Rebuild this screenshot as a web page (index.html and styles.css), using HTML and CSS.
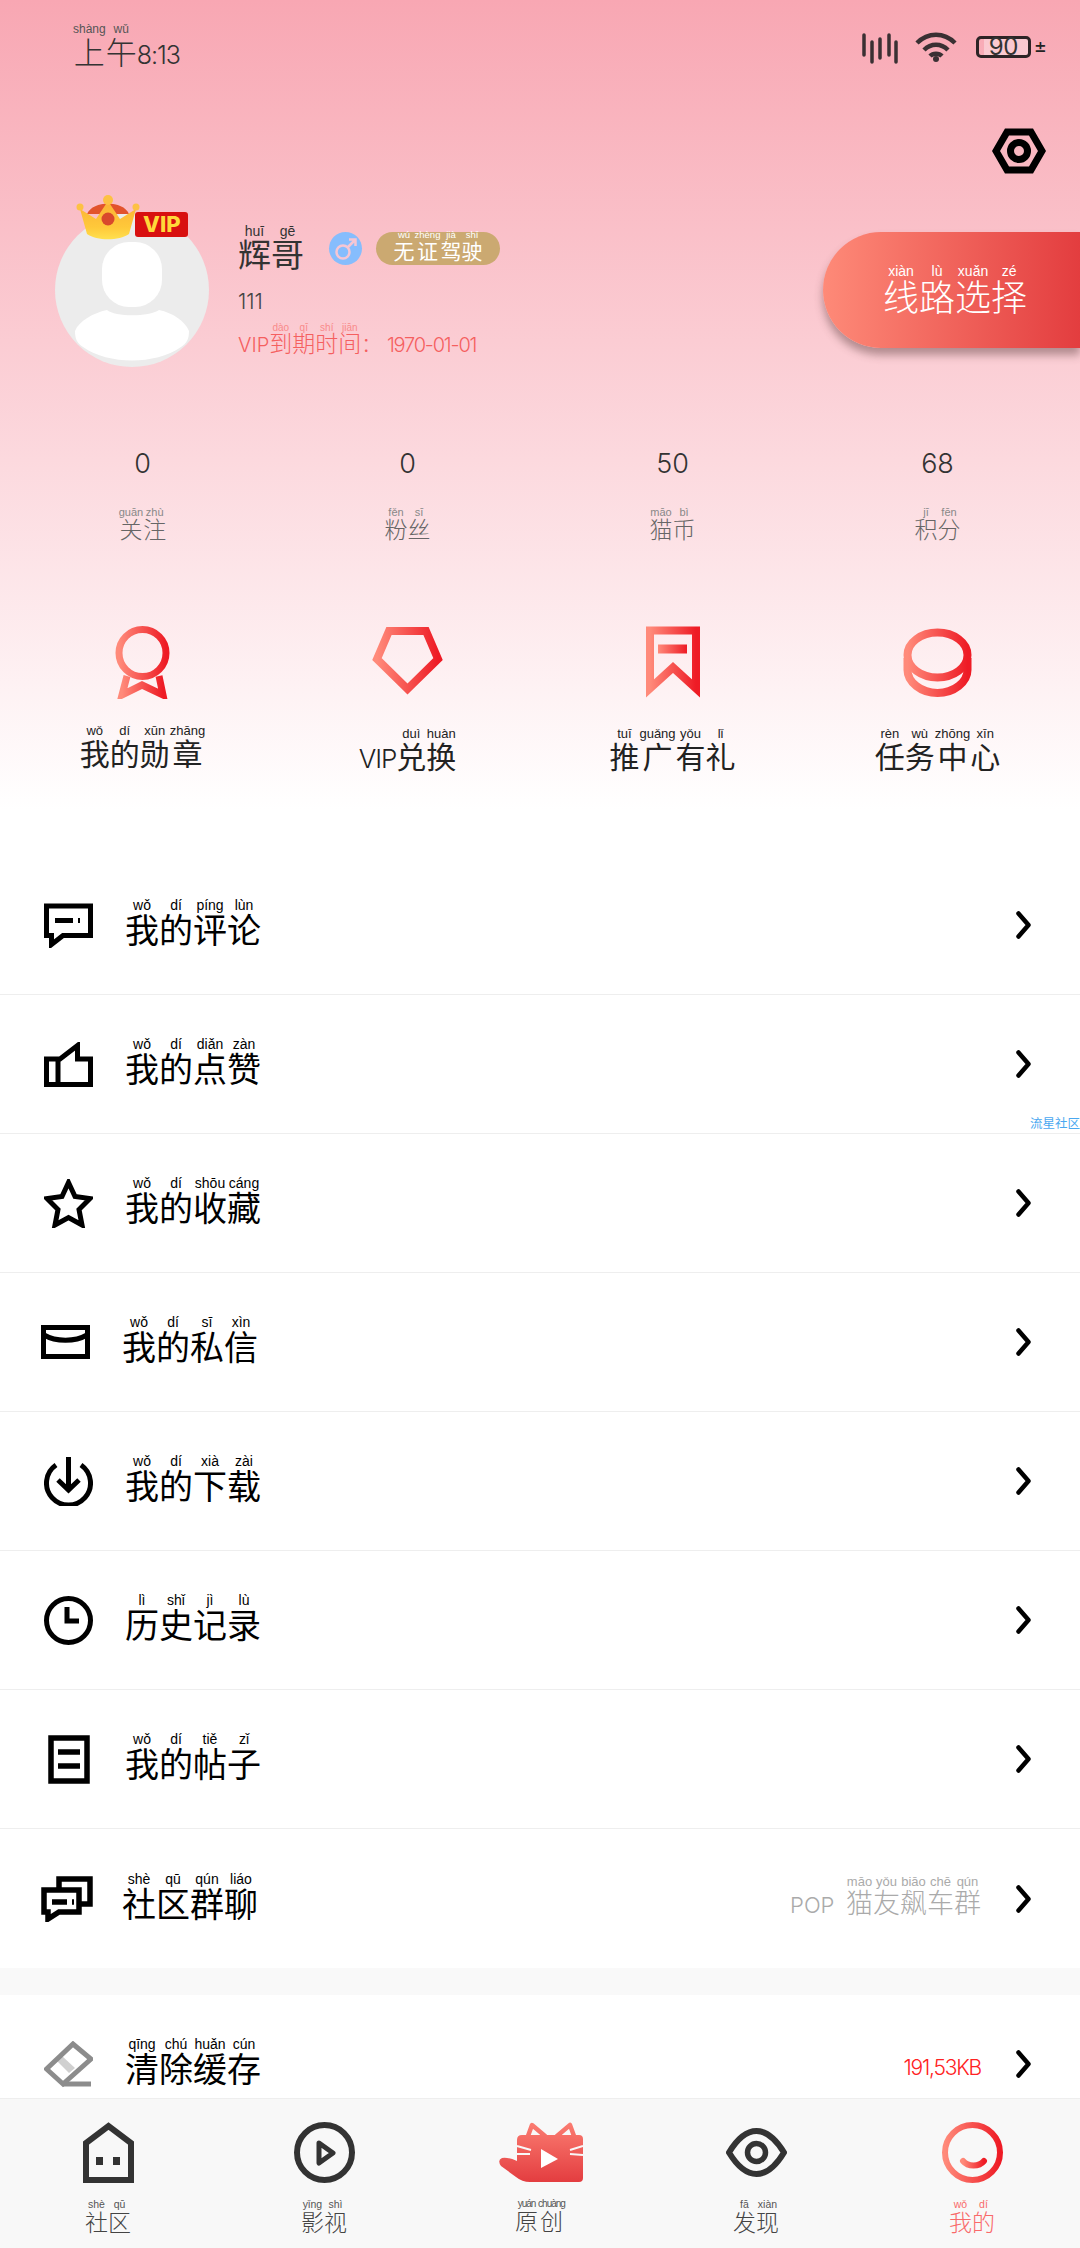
FILE: index.html
```html
<!DOCTYPE html>
<html lang="zh-CN">
<head>
<meta charset="utf-8">
<title>我的</title>
<link rel="stylesheet" href="styles.css">
</head>
<body>
<div class="page">
  <section class="hero">
    <div class="status">
      <div class="time"><ruby>上<rt>shàng</rt></ruby><ruby>午<rt>wǔ</rt></ruby><span class="time-num">8:13</span></div>
      <div class="status-icons">
        <svg class="ic-signal" viewBox="0 0 40 32"><path d="M3 3V23M11 10V30M19 7V26M28 3V23M35 10V30"/></svg>
        <svg class="ic-wifi" viewBox="0 0 42 30"><path d="M2 11C13 0 29 0 40 11"/><path d="M9 18C16 11 26 11 33 18"/><path d="M15 24C18 21 24 21 27 24" /><circle cx="21" cy="27" r="3"/></svg>
        <div class="battery"><span class="battery-num">90</span></div>
        <span class="battery-sign">±</span>
      </div>
    </div>
    <div class="settings-row">
      <svg class="ic-settings" viewBox="0 0 54 46"><path d="M15 4H39L50 23L39 42H15L4 23Z"/><circle cx="27" cy="23" r="8.5"/></svg>
    </div>
    <div class="profile">
      <div class="avatar">
        <svg class="avatar-img" viewBox="0 0 154 154">
          <circle cx="77" cy="77" r="77" fill="#ececec"/>
          <rect x="47" y="29" width="60" height="65" rx="27" fill="#fff"/>
          <path d="M20 118C24 108 38 100 52 97C60 104 94 104 104 97C118 100 130 108 134 118C134 126 132 130 126 134C100 152 54 152 28 134C22 130 20 126 20 118Z" fill="#fff"/>
        </svg>
        <span class="vip-badge">VIP</span>
        <svg class="crown" viewBox="0 0 66 46">
          <defs>
            <linearGradient id="crownFill" x1="0" y1="0" x2="0" y2="1"><stop offset="0" stop-color="#fbb035"/><stop offset=".7" stop-color="#ffc93a"/><stop offset="1" stop-color="#ffe04f"/></linearGradient>
          </defs>
          <path d="M12 20C18 6 48 6 54 20Z" fill="#e2532d"/>
          <path d="M5 15L21 25L33 7L45 25L61 15L54 40C44 47 22 47 12 40Z" fill="url(#crownFill)"/>
          <circle cx="33" cy="6" r="5" fill="#fdc143"/>
          <circle cx="5" cy="13" r="3.5" fill="#fdc143"/>
          <circle cx="61" cy="13" r="3.5" fill="#fdc143"/>
          <circle cx="33" cy="25" r="6.5" fill="#d9482c"/>
        </svg>
      </div>
      <div class="info">
        <div class="name-row">
          <span class="name"><ruby>辉<rt>huī</rt></ruby><ruby>哥<rt>gē</rt></ruby></span>
          <span class="gender"><svg viewBox="0 0 33 33"><circle cx="14" cy="20" r="6.5"/><path d="M18.5 15.5L26 8M20 7.5H26.5V14"/></svg></span>
          <span class="tag"><span class="tag-text"><ruby>无<rt>wú</rt></ruby><ruby>证<rt>zhèng</rt></ruby><ruby>驾<rt>jià</rt></ruby><ruby>驶<rt>shǐ</rt></ruby></span></span>
        </div>
        <div class="sign">111</div>
        <div class="expire">VIP<ruby>到<rt>dào</rt></ruby><ruby>期<rt>qī</rt></ruby><ruby>时<rt>shí</rt></ruby><ruby>间<rt>jiān</rt></ruby>： <span class="expire-date">1970-01-01</span></div>
      </div>
      <div class="route-btn"><ruby>线<rt>xiàn</rt></ruby><ruby>路<rt>lù</rt></ruby><ruby>选<rt>xuǎn</rt></ruby><ruby>择<rt>zé</rt></ruby></div>
    </div>
    <div class="stats">
      <div class="stat"><span class="stat-num">0</span><span class="stat-label"><ruby>关<rt>guān</rt></ruby><ruby>注<rt>zhù</rt></ruby></span></div>
      <div class="stat"><span class="stat-num">0</span><span class="stat-label"><ruby>粉<rt>fěn</rt></ruby><ruby>丝<rt>sī</rt></ruby></span></div>
      <div class="stat"><span class="stat-num">50</span><span class="stat-label"><ruby>猫<rt>māo</rt></ruby><ruby>币<rt>bì</rt></ruby></span></div>
      <div class="stat"><span class="stat-num">68</span><span class="stat-label"><ruby>积<rt>jī</rt></ruby><ruby>分<rt>fēn</rt></ruby></span></div>
    </div>
    <div class="features">
      <div class="feature">
        <svg class="fi fi-medal" viewBox="0 0 55 73">
          <defs>
            <linearGradient id="hot" x1="0" y1="0" x2="1" y2="0"><stop offset="0" stop-color="#ff8a7a"/><stop offset="1" stop-color="#ee1b25"/></linearGradient>
          </defs>
          <ellipse cx="27.5" cy="27" rx="23.5" ry="23.5"/>
          <path d="M12 50L7 69L27 59L48 69L44 50"/>
        </svg>
        <span class="feature-label feature-label-up"><ruby>我<rt>wǒ</rt></ruby><ruby>的<rt>dí</rt></ruby><ruby>勋<rt>xūn</rt></ruby><ruby>章<rt>zhāng</rt></ruby></span>
      </div>
      <div class="feature">
        <svg class="fi fi-gem" viewBox="0 0 71 71"><path d="M17 4H54L66 32L35.5 62L5 32Z"/></svg>
        <span class="feature-label"><span class="feature-latin">VIP</span><ruby>兑<rt>duì</rt></ruby><ruby>换<rt>huàn</rt></ruby></span>
      </div>
      <div class="feature">
        <svg class="fi fi-mark" viewBox="0 0 54 72"><path d="M4 4H50V62L27 41L4 62Z"/><rect class="fi-fill" x="12" y="18" width="29" height="9"/></svg>
        <span class="feature-label"><ruby>推<rt>tuī</rt></ruby><ruby>广<rt>guǎng</rt></ruby><ruby>有<rt>yǒu</rt></ruby><ruby>礼<rt>lǐ</rt></ruby></span>
      </div>
      <div class="feature">
        <svg class="fi fi-coin" viewBox="0 0 69 69"><ellipse cx="34.5" cy="27" rx="30" ry="22.5"/><path d="M4.5 30V42C4.5 54 18 65 34.5 65C51 65 64.5 54 64.5 42V30"/></svg>
        <span class="feature-label"><ruby>任<rt>rèn</rt></ruby><ruby>务<rt>wù</rt></ruby><ruby>中<rt>zhōng</rt></ruby><ruby>心<rt>xīn</rt></ruby></span>
      </div>
    </div>
  </section>

  <section class="list">
    <div class="row">
      <svg class="ri" viewBox="0 0 49 44"><path d="M2.5 2.5H46.5V32H19L7.5 41V32H2.5Z"/><path d="M11 17H29M34 17H36"/></svg>
      <span class="row-title"><ruby>我<rt>wǒ</rt></ruby><ruby>的<rt>dí</rt></ruby><ruby>评<rt>píng</rt></ruby><ruby>论<rt>lùn</rt></ruby></span>
      <svg class="chev" viewBox="0 0 15 28"><path d="M2.5 2.5L12.5 14L2.5 25.5"/></svg>
    </div>
    <div class="row">
      <svg class="ri" viewBox="0 0 49 45"><path d="M2.5 17H16L33.5 3.5V17H46.5V42.5H2.5Z"/><path d="M14 17V42"/></svg>
      <span class="row-title"><ruby>我<rt>wǒ</rt></ruby><ruby>的<rt>dí</rt></ruby><ruby>点<rt>diǎn</rt></ruby><ruby>赞<rt>zàn</rt></ruby></span>
      <svg class="chev" viewBox="0 0 15 28"><path d="M2.5 2.5L12.5 14L2.5 25.5"/></svg>
    </div>
    <div class="row">
      <svg class="ri ri-tall" viewBox="0 0 49 49"><path d="M24.5 3.5L31 17.5L46 19.5L35 30.5L38 46L24.5 38.5L11 46L14 30.5L3 19.5L18 17.5Z"/></svg>
      <span class="row-title"><ruby>我<rt>wǒ</rt></ruby><ruby>的<rt>dí</rt></ruby><ruby>收<rt>shōu</rt></ruby><ruby>藏<rt>cáng</rt></ruby></span>
      <svg class="chev" viewBox="0 0 15 28"><path d="M2.5 2.5L12.5 14L2.5 25.5"/></svg>
    </div>
    <div class="row row-shift">
      <svg class="ri ri-mail" viewBox="0 0 49 34"><rect x="2.5" y="2.5" width="44" height="29"/><path d="M3 10C15 17 34 17 46 10"/></svg>
      <span class="row-title"><ruby>我<rt>wǒ</rt></ruby><ruby>的<rt>dí</rt></ruby><ruby>私<rt>sī</rt></ruby><ruby>信<rt>xìn</rt></ruby></span>
      <svg class="chev" viewBox="0 0 15 28"><path d="M2.5 2.5L12.5 14L2.5 25.5"/></svg>
    </div>
    <div class="row">
      <svg class="ri ri-tall" viewBox="0 0 49 49"><path d="M12 8A22 22 0 1 0 37 8"/><path d="M24.5 0V33M14 23L24.5 33L35 23"/></svg>
      <span class="row-title"><ruby>我<rt>wǒ</rt></ruby><ruby>的<rt>dí</rt></ruby><ruby>下<rt>xià</rt></ruby><ruby>载<rt>zài</rt></ruby></span>
      <svg class="chev" viewBox="0 0 15 28"><path d="M2.5 2.5L12.5 14L2.5 25.5"/></svg>
    </div>
    <div class="row">
      <svg class="ri ri-tall" viewBox="0 0 49 49"><circle cx="24.5" cy="24.5" r="22"/><path d="M23 11V25H35"/></svg>
      <span class="row-title"><ruby>历<rt>lì</rt></ruby><ruby>史<rt>shǐ</rt></ruby><ruby>记<rt>jì</rt></ruby><ruby>录<rt>lù</rt></ruby></span>
      <svg class="chev" viewBox="0 0 15 28"><path d="M2.5 2.5L12.5 14L2.5 25.5"/></svg>
    </div>
    <div class="row">
      <div class="ri-slot"><svg class="ri-doc" viewBox="0 0 42 49"><rect x="3" y="3" width="36" height="43"/><path d="M10 17H32M10 31H32"/></svg></div>
      <span class="row-title"><ruby>我<rt>wǒ</rt></ruby><ruby>的<rt>dí</rt></ruby><ruby>帖<rt>tiě</rt></ruby><ruby>子<rt>zǐ</rt></ruby></span>
      <svg class="chev" viewBox="0 0 15 28"><path d="M2.5 2.5L12.5 14L2.5 25.5"/></svg>
    </div>
    <div class="row row-shift row-last">
      <svg class="ri ri-group" viewBox="0 0 52 46"><path d="M3 14H38V36H18L7 43V36H3Z"/><path d="M18 13V3H49V28H39"/><path d="M11 26H26M31 26H33"/></svg>
      <span class="row-title row-title-near"><ruby>社<rt>shè</rt></ruby><ruby>区<rt>qū</rt></ruby><ruby>群<rt>qún</rt></ruby><ruby>聊<rt>liáo</rt></ruby></span>
      <span class="row-note"><span class="note-latin">POP</span> <ruby>猫<rt>māo</rt></ruby><ruby>友<rt>yǒu</rt></ruby><ruby>飙<rt>biāo</rt></ruby><ruby>车<rt>chē</rt></ruby><ruby>群<rt>qún</rt></ruby></span>
      <svg class="chev chev-note" viewBox="0 0 15 28"><path d="M2.5 2.5L12.5 14L2.5 25.5"/></svg>
    </div>
    <div class="gap"></div>
    <div class="row">
      <svg class="ri ri-eraser" viewBox="0 0 49 47"><path class="eraser-band" d="M12 19L18 15L31 27L25 32Z"/><path d="M2.5 28L29 3L47 18L19 43Z"/><path d="M19 43H47"/></svg>
      <span class="row-title"><ruby>清<rt>qīng</rt></ruby><ruby>除<rt>chú</rt></ruby><ruby>缓<rt>huǎn</rt></ruby><ruby>存<rt>cún</rt></ruby></span>
      <span class="row-cache">191,53KB</span>
      <svg class="chev chev-note" viewBox="0 0 15 28"><path d="M2.5 2.5L12.5 14L2.5 25.5"/></svg>
    </div>
  </section>

  <span class="watermark">流星社区</span>

  <nav class="tabs">
    <div class="tab">
      <svg class="ti ti-home" viewBox="0 0 51 61"><path d="M3 58V21L25.5 4L48 21V58Z"/><path class="ti-solid" d="M13 35H20V43H13ZM30 35H37V43H30Z"/></svg>
      <span class="tab-label"><ruby>社<rt>shè</rt></ruby><ruby>区<rt>qū</rt></ruby></span>
    </div>
    <div class="tab">
      <svg class="ti ti-round" viewBox="0 0 61 61"><circle cx="30.5" cy="30.5" r="27.5"/><path d="M25 21L39 31L25 41Z"/></svg>
      <span class="tab-label"><ruby>影<rt>yǐng</rt></ruby><ruby>视<rt>shì</rt></ruby></span>
    </div>
    <div class="tab">
      <svg class="ti-logo" viewBox="0 0 85 61">
        <defs><linearGradient id="logoFill" gradientUnits="userSpaceOnUse" x1="0" y1="0" x2="0" y2="61"><stop offset="0" stop-color="#fb7d72"/><stop offset="1" stop-color="#e33c3f"/></linearGradient></defs>
        <path d="M24 13H81Q85 13 85 17V56Q85 60 81 60H32Q24 60 18 55L3 44Q-1 38 4 36Q10 35 19 39V18Q19 13 24 13Z" fill="url(#logoFill)"/>
        <path d="M30 14L34 3L47 14M59 14L72 3L76 14" fill="none" stroke="url(#logoFill)" stroke-width="4.5" stroke-linecap="round" stroke-linejoin="round"/>
        <path d="M19 24L33 28M19 32H32M85 24L72 28M85 33L72 32" fill="none" stroke="#f8f8f8" stroke-width="2"/>
        <path d="M43 27L60 37L43 46Z" fill="#fff"/>
      </svg>
      <span class="tab-label tab-label-tight"><ruby>原<rt>yuán</rt></ruby><ruby>创<rt>chuàng</rt></ruby></span>
    </div>
    <div class="tab">
      <svg class="ti ti-eye" viewBox="0 0 61 49"><path d="M3 24.5C13 8 22 3 30.5 3S48 8 58 24.5C48 41 39 46 30.5 46S13 41 3 24.5Z"/><circle cx="30.5" cy="24.5" r="9"/></svg>
      <span class="tab-label"><ruby>发<rt>fā</rt></ruby><ruby>现<rt>xiàn</rt></ruby></span>
    </div>
    <div class="tab tab-on">
      <svg class="ti ti-me" viewBox="0 0 61 61"><circle cx="30.5" cy="30.5" r="27.5"/><path d="M21 39C26 45 37 45 42 39"/></svg>
      <span class="tab-label"><ruby>我<rt>wǒ</rt></ruby><ruby>的<rt>dí</rt></ruby></span>
    </div>
  </nav>
</div>
</body>
</html>
```

FILE: styles.css
```css
* { box-sizing: border-box; }
html, body { margin: 0; padding: 0; }
body { font-family: Inter, "Noto Sans CJK SC", sans-serif; background: #fff; color: #000; }
.page { position: relative; width: 1080px; height: 2248px; overflow: hidden; background: #fff; }
ruby { ruby-position: over; }
rt { font-family: "Liberation Sans", Inter, sans-serif; }
svg { display: block; flex: none; fill: none; }

/* hero */
.hero { height: 856px; background: linear-gradient(180deg, #f8a7b3 0, #ffffff 810px); }
.status { height: 70px; padding: 23px 33px 0 73px; display: flex; justify-content: space-between; align-items: flex-start; }
.time { font-size: 31px; line-height: 36px; font-weight: 300; color: #333; }
.time rt { font-size: 12px; color: #555; }
.time-num { font-size: 25px; letter-spacing: -1px; }
.status-icons { display: flex; align-items: flex-start; margin-top: 9px; }
.ic-signal { width: 40px; height: 32px; stroke: #3a3033; stroke-width: 3.5; stroke-linecap: round; }
.ic-wifi { width: 42px; height: 30px; margin-left: 14px; stroke: #3a3033; stroke-width: 4.5; }
.ic-wifi circle { fill: #3a3033; stroke: none; }
.battery { width: 55px; height: 22px; margin: 4px 0 0 19px; border: 3px solid #2d2426; border-radius: 5px; display: flex; justify-content: center; align-items: center; background: linear-gradient(90deg, transparent 5px, rgba(255,255,255,.35) 5px); }
.battery-num { font-size: 24px; line-height: 18px; font-weight: 400; color: #333; letter-spacing: -.5px; }
.battery-sign { font-size: 20px; line-height: 24px; margin: 2px 0 0 3px; color: #222; }
.settings-row { height: 104px; padding: 58px 34px 0 0; display: flex; justify-content: flex-end; }
.ic-settings { width: 54px; height: 46px; stroke: #000; stroke-width: 7; }

.profile { display: flex; align-items: flex-start; height: 154px; margin-top: 39px; padding-left: 55px; }
.avatar { position: relative; width: 154px; height: 154px; flex: none; }
.avatar-img { width: 154px; height: 154px; }
.crown { position: absolute; left: 20px; top: -19px; width: 66px; height: 46px; }
.vip-badge { position: absolute; left: 80px; top: -1px; width: 53px; height: 25px; border-radius: 3px; background: #d81010; color: #ffd83a; font: 800 22px/25px Inter, sans-serif; padding-left: 8px; }
.info { margin-left: 29px; display: flex; flex-direction: column; align-items: flex-start; padding-top: 15px; width: 340px; }
.name-row { display: flex; align-items: center; height: 40px; }
.name { font-size: 33px; line-height: 38px; color: #333; width: 91px; }
.name rt { font-size: 14px; color: #333; position: relative; top: 2px; }
.gender { width: 33px; height: 33px; border-radius: 50%; background: #86bdfd; flex: none; }
.gender svg { width: 33px; height: 33px; stroke: #f6c6d3; stroke-width: 2.5; }
.tag { margin-left: 14px; width: 124px; height: 33px; border-radius: 17px; background: #cba971; color: #fff; display: flex; justify-content: center; align-items: center; }
.tag-text { font-size: 21px; line-height: 26px; margin-bottom: 2px; padding-top: 8px; white-space: nowrap; }
.tag rt { font-size: 9.5px; color: #fff; }
.sign { font-size: 21px; line-height: 26px; font-weight: 300; color: #444; margin-top: 21px; }
.expire { font-size: 20px; line-height: 28px; font-weight: 300; color: #f55f5f; margin-top: 6px; white-space: nowrap; }
.expire ruby { font-size: 23px; }
.expire rt { font-size: 10px; color: #f98a8a; position: relative; top: 2px; }
.expire-date { letter-spacing: -1.2px; }
.route-btn { margin: 19px 0 0 auto; width: 257px; height: 116px; border-radius: 58px 0 0 58px; background: linear-gradient(90deg, #fe8a78, #e33d3f); box-shadow: 0 7px 9px rgba(90, 60, 60, .45); color: #fff; font-size: 36px; display: flex; align-items: center; padding-left: 60px; padding-top: 2px; line-height: 40px; font-weight: 300; }
.route-btn rt { font-size: 14px; color: #fff; }

.stats { display: grid; grid-template-columns: repeat(4, 1fr); padding: 80px 10px 0; }
.stat { display: flex; flex-direction: column; align-items: center; }
.stat-num { font-size: 27px; line-height: 34px; font-weight: 300; color: #333; }
.stat-label { margin-top: 25px; font-size: 23px; line-height: 28px; color: #666; font-weight: 300; }
.stat-label rt { font-size: 11px; color: #888; position: relative; top: 1px; }

.features { display: grid; grid-template-columns: repeat(4, 1fr); padding: 82px 10px 0; }
.feature { display: flex; flex-direction: column; align-items: center; }
.fi { height: 73px; stroke: url(#hot); stroke-width: 7; }
.fi-medal { width: 55px; }
.fi-gem { width: 71px; stroke-width: 8; }
.fi-mark { width: 54px; stroke-width: 8; }
.fi-coin { width: 69px; stroke-width: 8; }
.fi-fill { fill: url(#hot); stroke: none; }
.feature-label { margin-top: 28px; font-size: 30px; line-height: 34px; color: #222; white-space: nowrap; }
.feature-label-up { margin-top: 25px; }
.feature-latin { font-size: 26px; font-weight: 300; letter-spacing: -1px; }
.feature-label rt { font-size: 13px; color: #222; }

/* list */
.list { display: flex; flex-direction: column; }
.row { height: 139px; flex: none; display: flex; align-items: center; padding: 0 49px 0 44px; border-bottom: 1px solid #eee; }
.row-last { border-bottom: 0; }
.row-shift { padding-left: 41px; }
.ri { width: 49px; height: 45px; stroke: #000; stroke-width: 5; }
.ri-tall { height: 49px; }
.ri-mail { height: 34px; }
.ri-group { width: 52px; height: 46px; stroke-width: 5.5; }
.ri-eraser { height: 47px; stroke: #8c8c8c; }
.eraser-band { fill: #d0d0d0; stroke: none; }
.ri-slot { width: 49px; display: flex; justify-content: center; }
.ri-doc { width: 42px; height: 49px; stroke: #000; stroke-width: 5.5; }
.row-title { margin-left: 32px; font-size: 34px; line-height: 40px; color: #000; padding-top: 8px; white-space: nowrap; }
.row-title-near { margin-left: 29px; }
.row-title rt { font-size: 14px; color: #000; }
.chev { width: 15px; height: 28px; margin-left: auto; stroke: #000; stroke-width: 4.5; stroke-linecap: round; stroke-linejoin: round; }
.chev-note { margin-left: 35px; }
.row-note { margin-left: auto; font-size: 27px; line-height: 34px; color: #aaa; font-weight: 300; padding-top: 6px; white-space: nowrap; }
.note-latin { font-size: 22px; margin-right: 4px; }
.row-note rt { font-size: 13px; color: #aaa; }
.row-cache { margin-left: auto; font-size: 21px; font-weight: 300; color: #f22; letter-spacing: -1.2px; padding-top: 6px; }
.gap { height: 27px; flex: none; background: #f9f9f9; }

.watermark { position: absolute; right: 0; top: 1117px; font-size: 12.5px; line-height: 14px; color: #4aa8f0; }

/* tabs */
.tabs { position: absolute; left: 0; right: 0; bottom: 0; height: 150px; background: #f8f8f8; border-top: 1px solid #eee; display: grid; grid-template-columns: repeat(5, 1fr); }
.tab { display: flex; flex-direction: column; align-items: center; padding-top: 23px; }
.ti { height: 61px; stroke: #333; stroke-width: 6; }
.ti-home { width: 51px; }
.ti-solid { fill: #333; stroke: none; }
.ti-round { width: 61px; }
.ti-round path { stroke-width: 5; stroke-linejoin: round; }
.ti-logo { width: 85px; height: 61px; }
.ti-eye { width: 61px; height: 49px; margin: 6px 0; }
.ti-eye circle { stroke-width: 5.5; }
.ti-me { width: 61px; stroke: url(#hot); }
.ti-me path { stroke-linecap: round; stroke-width: 6; }
.tab-label { margin-top: 16px; font-size: 23px; line-height: 28px; color: #444; font-weight: 300; white-space: nowrap; }
.tab-label rt { font-size: 10.5px; color: #555; }
.tab-label-tight rt { font-size: 10px; letter-spacing: -1px; }
.tab-on .tab-label, .tab-on .tab-label rt { color: #f96a6a; }
```
